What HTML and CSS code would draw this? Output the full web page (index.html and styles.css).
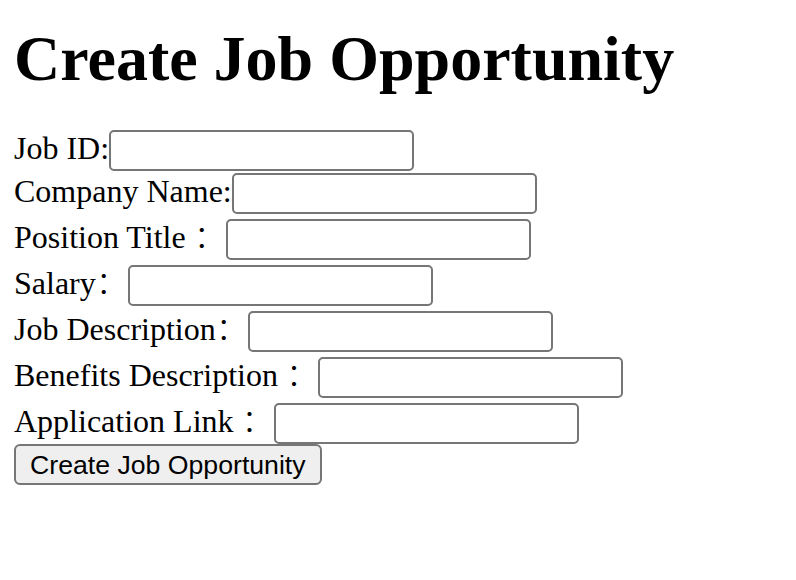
FILE: index.html
```html
<!DOCTYPE html>
<html lang="en">
<head>
<meta charset="utf-8">
<title>Create Job Opportunity</title>
<link rel="stylesheet" href="styles.css">
</head>
<body class="page">
  <h1 class="title">Create Job Opportunity</h1>
  <form class="job-form">
    <div class="row row-first"><label class="label" for="jobId">Job ID:</label><input class="field" id="jobId" type="text"></div>
    <div class="row"><label class="label" for="company">Company Name:</label><input class="field" id="company" type="text"></div>
    <div class="row"><label class="label" for="position">Position Title ：</label><input class="field" id="position" type="text"></div>
    <div class="row"><label class="label" for="salary">Salary：</label><input class="field" id="salary" type="text"></div>
    <div class="row"><label class="label" for="desc">Job Description：</label><input class="field" id="desc" type="text"></div>
    <div class="row"><label class="label" for="benefits">Benefits Description ：</label><input class="field" id="benefits" type="text"></div>
    <div class="row row-last"><label class="label" for="link">Application Link ：</label><input class="field" id="link" type="text"></div>
    <button class="submit" type="submit">Create Job Opportunity</button>
  </form>
</body>
</html>
```
FILE: styles.css
```css
html, body {
  background: #ffffff;
}
.page {
  margin: 0;
  padding: 0 14px;
  font-family: "Liberation Serif", "Noto Sans CJK SC", serif;
  font-size: 32px;
  color: #000000;
}
.title {
  margin: 22px 0 0;
  font-size: 64px;
  font-weight: bold;
  line-height: 73px;
  height: 108px;
}
.job-form {
  display: flex;
  flex-direction: column;
  align-items: flex-start;
}
.row {
  display: flex;
  align-items: baseline;
  height: 46px;
  white-space: pre;
}
.row-first {
  height: 43px;
}
.row-last {
  height: 41px;
}
.label {
  line-height: 36px;
  font-weight: 300;
  font-family: "Liberation Serif", "Noto Sans CJK SC", serif;
}
.field {
  box-sizing: border-box;
  width: 305px;
  height: 41px;
  margin: 0;
  padding: 2px 4px;
  border: 2px solid #767676;
  border-radius: 5px;
  background: #ffffff;
  font-family: "Liberation Sans", Arial, sans-serif;
  font-size: 26.67px;
}
.submit {
  box-sizing: border-box;
  height: 41px;
  margin: 0;
  padding: 0 14px;
  border: 2px solid #767676;
  border-radius: 6px;
  background: #efefef;
  color: #000000;
  font-family: "Liberation Sans", Arial, sans-serif;
  font-size: 26.67px;
  line-height: 30px;
}
```
